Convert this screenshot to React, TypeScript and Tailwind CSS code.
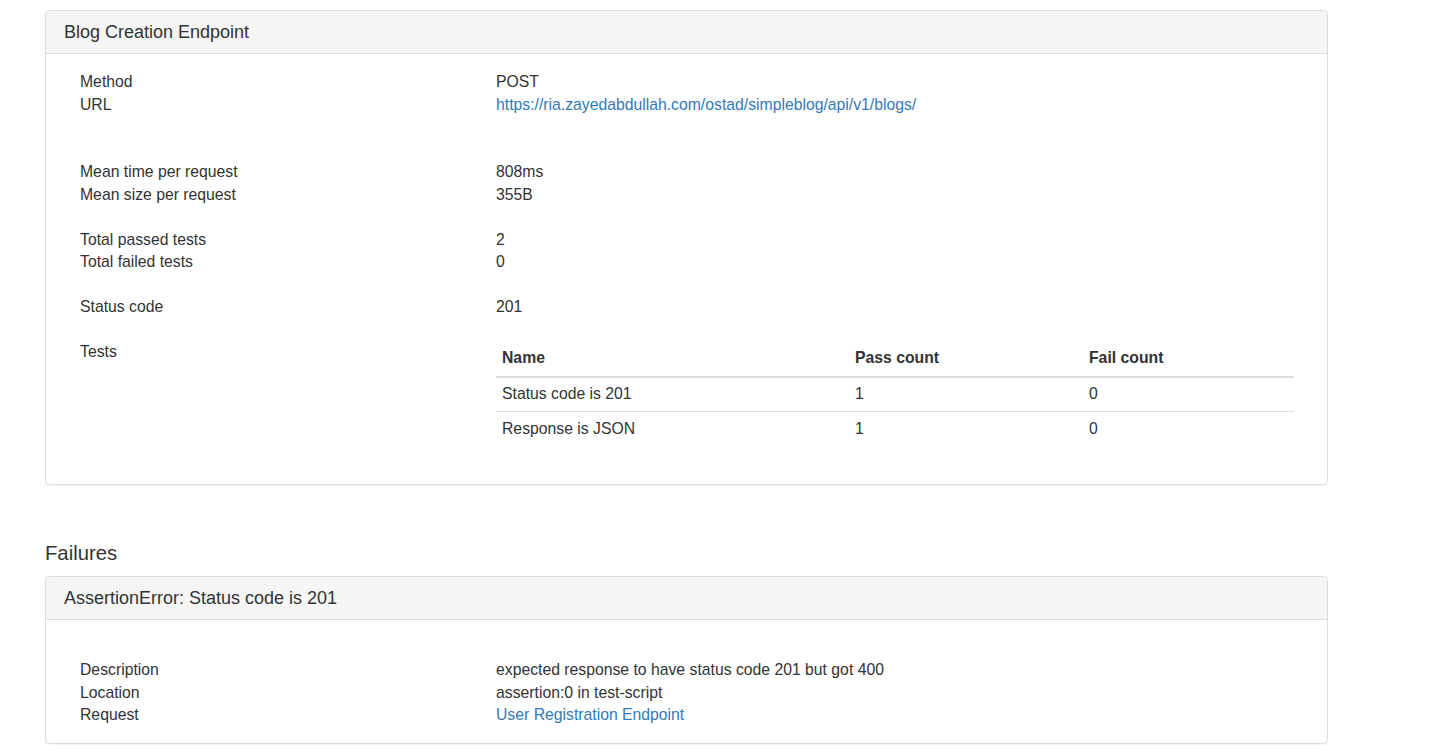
import type { ReactNode } from "react";

const rows = [
  { name: "Status code is 201", pass: 1, fail: 0 },
  { name: "Response is JSON", pass: 1, fail: 0 },
];

function Field({ label, children }: { label: string; children: ReactNode }) {
  return (
    <div className="flex">
      <div className="w-[416px] shrink-0">{label}</div>
      <div className="flex-1 min-w-0">{children}</div>
    </div>
  );
}

function Panel({ title, children, bodyClass }: { title: string; children: ReactNode; bodyClass: string }) {
  return (
    <div className="w-[1283px] rounded-[4.5px] border border-[#ddd] bg-white shadow-[0_1px_1px_rgba(0,0,0,0.05)]">
      <div className="rounded-t-[4px] border-b border-[#ddd] bg-[#f5f5f5] px-[18px] py-[11px] text-[18px] leading-[20px] text-[#333]">
        {title}
      </div>
      <div className={bodyClass}>{children}</div>
    </div>
  );
}

export default function App() {
  return (
    <div className="min-h-screen bg-white pl-[45px] pt-[10px] font-['Liberation_Sans',Arial,Helvetica,sans-serif] text-[15.75px] leading-[22.5px] text-[#333]">
      <Panel title="Blog Creation Endpoint" bodyClass="pl-[34px] pr-[33px] pt-[17px] pb-[16px]">
        <Field label="Method">POST</Field>
        <Field label="URL">
          <a className="text-[#337ab7]" href="#">
            https://ria.zayedabdullah.com/ostad/simpleblog/api/v1/blogs/
          </a>
        </Field>

        <div className="mt-[45px]">
          <Field label="Mean time per request">808ms</Field>
          <Field label="Mean size per request">355B</Field>
        </div>

        <div className="mt-[22.5px]">
          <Field label="Total passed tests">2</Field>
          <Field label="Total failed tests">0</Field>
        </div>

        <div className="mt-[22.5px]">
          <Field label="Status code">201</Field>
        </div>

        <div className="mt-[22.5px]">
          <Field label="Tests">
            <table className="mb-[22.5px] w-full">
              <thead>
                <tr className="border-b-2 border-[#ddd]">
                  <th className="w-[353px] px-[6px] py-[6px] text-left font-bold">Name</th>
                  <th className="w-[234px] px-[6px] py-[6px] text-left font-bold">Pass count</th>
                  <th className="px-[6px] py-[6px] text-left font-bold">Fail count</th>
                </tr>
              </thead>
              <tbody>
                {rows.map((r, i) => (
                  <tr key={r.name} className={i > 0 ? "border-t border-[#ddd]" : ""}>
                    <td className="px-[6px] py-[5.5px]">{r.name}</td>
                    <td className="px-[6px] py-[5.5px]">{r.pass}</td>
                    <td className="px-[6px] py-[5.5px]">{r.fail}</td>
                  </tr>
                ))}
              </tbody>
            </table>
          </Field>
        </div>
      </Panel>

      <h4 className="mt-[57px] mb-[12px] text-[20.25px] leading-[22px] font-normal">Failures</h4>

      <Panel title="AssertionError: Status code is 201" bodyClass="pl-[34px] pr-[33px] pt-[39px] pb-[16px]">
        <Field label="Description">expected response to have status code 201 but got 400</Field>
        <Field label="Location">assertion:0 in test-script</Field>
        <Field label="Request">
          <a className="text-[#337ab7]" href="#">
            User Registration Endpoint
          </a>
        </Field>
      </Panel>
    </div>
  );
}
